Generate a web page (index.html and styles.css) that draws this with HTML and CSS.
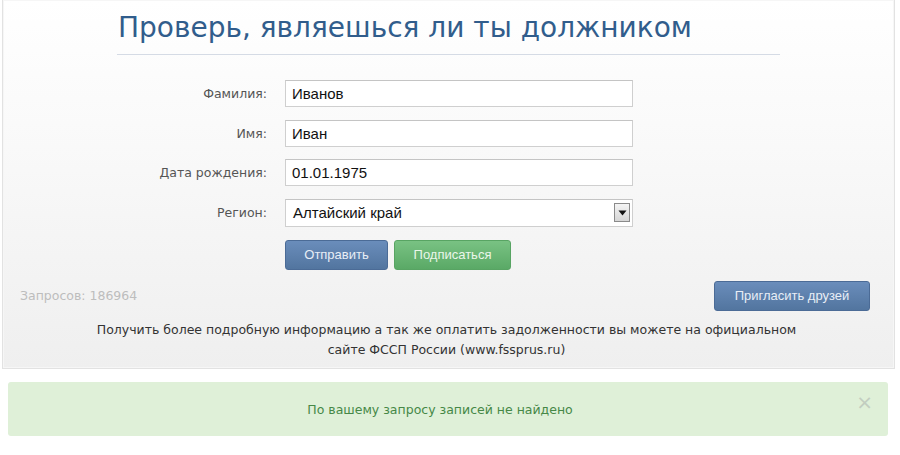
FILE: index.html
```html
<!DOCTYPE html>
<html lang="ru">
<head>
<meta charset="utf-8">
<title>Проверь, являешься ли ты должником</title>
<link rel="stylesheet" href="styles.css">
</head>
<body>
<div class="panel">
  <div class="content">
    <h1 class="title">Проверь, являешься ли ты должником</h1>
    <form class="form">
      <label class="label" for="f1">Фамилия:</label>
      <input class="field" id="f1" type="text" value="Иванов">
      <label class="label" for="f2">Имя:</label>
      <input class="field" id="f2" type="text" value="Иван">
      <label class="label" for="f3">Дата рождения:</label>
      <input class="field" id="f3" type="text" value="01.01.1975">
      <label class="label">Регион:</label>
      <div class="select">
        <span class="select-value">Алтайский край</span>
        <span class="select-arrow"><svg width="9" height="6" viewBox="0 0 9 6"><path d="M0.5 0.5h8l-4 5z" fill="#111"/></svg></span>
      </div>
      <span></span>
      <div class="actions">
        <button type="button" class="btn btn-blue btn-send">Отправить</button>
        <button type="button" class="btn btn-green btn-sub">Подписаться</button>
      </div>
    </form>
  </div>
  <div class="stats-row">
    <span class="stats">Запросов: 186964</span>
    <button type="button" class="btn btn-blue btn-invite">Пригласить друзей</button>
  </div>
  <p class="info">Получить более подробную информацию а так же оплатить задолженности вы можете на официальном<br>сайте ФССП России (www.fssprus.ru)</p>
</div>
<div class="alert">
  <span class="alert-text">По вашему запросу записей не найдено</span>
  <span class="alert-close">×</span>
</div>
</body>
</html>
```
FILE: styles.css
```css
html, body {
  margin: 0;
  padding: 0;
  background: #ffffff;
}
body {
  font-family: "DejaVu Sans", Verdana, sans-serif;
  width: 900px;
  height: 455px;
  overflow: hidden;
}
.panel {
  margin: 0 5px 0 2px;
  height: 369px;
  box-sizing: border-box;
  border: 1px solid #e2e2e2;
  border-top: none;
  background: linear-gradient(to bottom, #ffffff 0%, #f9f9f9 40%, #efefef 100%);
  box-shadow: inset 0 0 0 1px #f6f6f6;
  display: flex;
  flex-direction: column;
}
.content {
  margin-left: 114px;
  width: 663px;
}
.title {
  margin: 0;
  padding-top: 9px;
  height: 55px;
  box-sizing: border-box;
  font-weight: normal;
  font-size: 28px;
  line-height: 38px;
  color: #315d8c;
  border-bottom: 1px solid #d5dbe5;
  white-space: nowrap;
  padding-left: 1px;
}
.form {
  margin-top: 25px;
  display: grid;
  grid-template-columns: 150px 348px;
  column-gap: 18px;
  row-gap: 12.5px;
  align-items: center;
}
.label {
  text-align: right;
  font-size: 12.5px;
  color: #555555;
}
.field, .select {
  height: 27px;
  box-sizing: border-box;
  border: 1px solid #cfcfcf;
  border-top-color: #c4c4c4;
  background: #ffffff;
  padding: 0 6px;
  font-family: "Liberation Sans", Arial, sans-serif;
  font-size: 15px;
  color: #111111;
  margin: 0;
  outline: none;
}
.select {
  display: flex;
  align-items: center;
  justify-content: space-between;
  padding: 0 2px 0 7px;
  height: 28px;
}
.select-arrow {
  width: 16px;
  height: 19px;
  box-sizing: border-box;
  border: 1px solid #8a8a8a;
  background: linear-gradient(to bottom, #f4f4f4, #d6d6d6);
  display: flex;
  align-items: center;
  justify-content: center;
}
.actions {
  display: flex;
  gap: 6px;
  margin-top: 0.5px;
}
.btn {
  height: 30px;
  box-sizing: border-box;
  border-radius: 3px;
  font-family: "Liberation Sans", Tahoma, sans-serif;
  font-size: 13px;
  padding: 0;
  cursor: pointer;
}
.btn-blue {
  background: linear-gradient(to bottom, #6a8dbb, #52759f);
  border: 1px solid #4b6b96;
  color: #e8eef6;
}
.btn-green {
  background: linear-gradient(to bottom, #79c283, #5aa966);
  border: 1px solid #58a463;
  color: #eaf6ea;
}
.btn-send { width: 103px; }
.btn-sub { width: 117px; }
.stats-row {
  display: flex;
  justify-content: space-between;
  align-items: center;
  margin-top: 11px;
  padding: 0 24px 0 17px;
}
.stats {
  font-size: 12.5px;
  color: #bdbdbd;
}
.btn-invite {
  width: 156px;
}
.info {
  margin: 9px 0 0;
  text-align: center;
  font-size: 12.5px;
  line-height: 20px;
  color: #333333;
  padding-right: 4px;
}
.alert {
  margin: 13px 12px 0 8px;
  height: 54px;
  background: #dff0d8;
  border-radius: 3px;
  position: relative;
  display: flex;
  align-items: center;
  justify-content: center;
}
.alert-text {
  font-size: 12.5px;
  color: #468847;
  padding-right: 16px;
}
.alert-close {
  position: absolute;
  right: 15px;
  top: 10px;
  font-family: "DejaVu Sans", sans-serif;
  font-size: 20px;
  line-height: 20px;
  color: #c2cdc0;
}
```
